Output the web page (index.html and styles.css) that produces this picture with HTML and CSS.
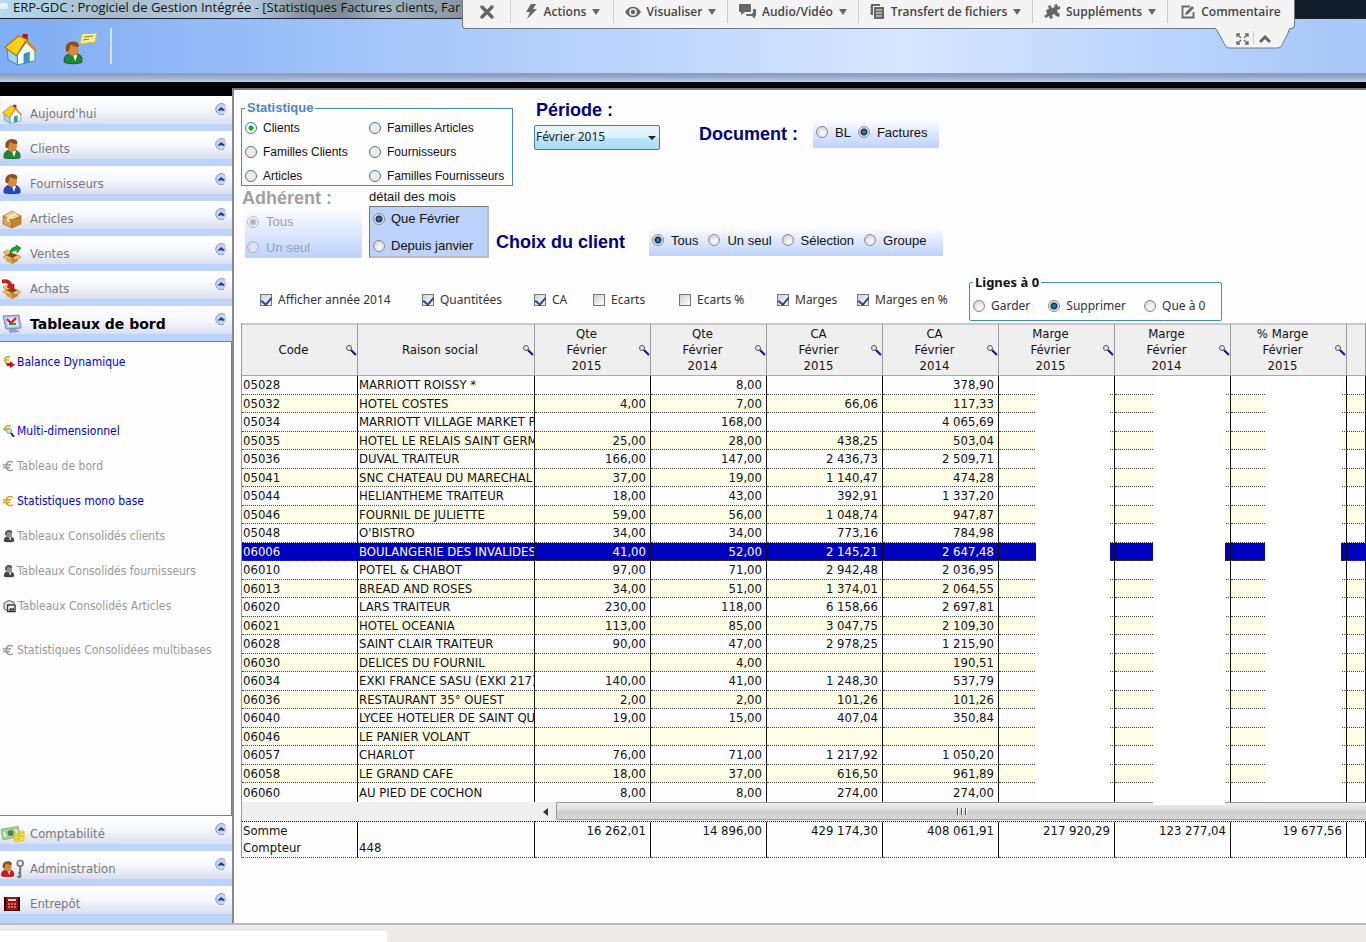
FILE: index.html
```html
<!DOCTYPE html>
<html lang="fr">
<head>
  <meta charset="UTF-8">
  <meta name="viewport" content="width=device-width, initial-scale=1.0">
  <title>ERP-GDC : Progiciel de Gestion Intégrée</title>
  <link rel="stylesheet" href="styles.css">
</head>
<body>
  <svg class="sprite" aria-hidden="true">
    <symbol id="house" viewBox="0 0 32 32">
      <path d="M3 15l10 6v10L4 26z" fill="#9fd8ec" stroke="#4b8fa8"/>
      <path d="M13 21l9-13 8 8v11l-17 4z" fill="#f2fbff" stroke="#4b8fa8"/>
      <path d="M19 20l6-2v10l-6 2z" fill="#3d94b4"/>
      <path d="M18 1h5v8l-5-3z" fill="#c41212"/>
      <path d="M1 14L14 3l8 3-10 16z" fill="#ffd016" stroke="#a87404"/>
      <path d="M21 5l11 12-2 1L20 8z" fill="#d88a10"/>
    </symbol>
    <symbol id="user" viewBox="0 0 20 20">
      <path d="M2 19c-1-5 2-7 5-8h6c4 1 6 4 5 8-4 1.500-12 1.500-16 0z" fill="currentColor" stroke="#222" stroke-opacity=".5"/>
      <path d="M10 12l2 6 2-6z" fill="#fff"/>
      <ellipse cx="10" cy="7" rx="5" ry="6" fill="#d88a3a"/>
      <path d="M4 9c-2-5 1-9 6-9s6 3 5 5c-3 0-5-1-7-2-1 1-1 4-2 6z" fill="#8a4f1c"/>
    </symbol>
    <symbol id="box" viewBox="0 0 20 20">
      <path d="M1 7l9 4v8l-9-4z" fill="#e2a24a" stroke="#8a5a1c" stroke-width=".6"/>
      <path d="M10 11l9-4v8l-9 4z" fill="#c9852e" stroke="#8a5a1c" stroke-width=".6"/>
      <path d="M1 7l9-5 9 5-9 4z" fill="#f6cf86" stroke="#8a5a1c" stroke-width=".6"/>
      <path d="M5 9l8-5 2 1-8 5v3l-2-1z" fill="#fff0c8"/>
    </symbol>
    <symbol id="openbox" viewBox="0 0 20 20">
      <path d="M4 11l6 3v6l-6-3z" fill="#e2a24a"/>
      <path d="M10 14l6-3v6l-6 3z" fill="#c9852e"/>
      <path d="M4 11l6-2 6 2-6 3z" fill="#7a4a14"/>
      <path d="M4 11l6 3-3 2-6-3zM16 11l-6 3 4 2 5-3zM4 11L1 8l5-2 4 3z" fill="#f3bf6a" stroke="#9a6420" stroke-width=".5"/>
    </symbol>
    <symbol id="screen" viewBox="0 0 20 20">
      <path d="M1 2l16-1 2 13-15 1z" fill="#b4bce4" stroke="#8088b8"/>
      <path d="M4 4l11-1 2 9-11 1z" fill="#e0e6fa"/>
      <path d="M5 5l4 4 5-5" fill="none" stroke="#e01010" stroke-width="2"/>
      <path d="M7 10h7" stroke="#20a030" stroke-width="2"/>
      <path d="M7 15h7l4 3-11 1z" fill="#9aa0c8"/>
    </symbol>
    <symbol id="money" viewBox="0 0 26 20">
      <path d="M1 5l18-3 2 11-18 3z" fill="#9ccf90" stroke="#8fbf88"/>
      <circle cx="11" cy="9" r="3" fill="#4f7f48"/>
      <path d="M4 8l2 5M16 5l2 4" stroke="#e8f6e0" stroke-width="2"/>
      <path d="M15 10h5v8h-5zM20 7h5v10h-5z" fill="#f4e04a" stroke="#e0c83c"/>
      <path d="M15 12h5M15 15h5M20 9h5M20 12h5" stroke="#d8b82c"/>
    </symbol>
    <symbol id="key" viewBox="0 0 10 20">
      <circle cx="5" cy="4" r="3" fill="none" stroke="#808080" stroke-width="2"/>
      <path d="M5 7v12M5 18H2M5 14H3" stroke="#707070" stroke-width="2"/>
    </symbol>
    <symbol id="calc" viewBox="0 0 16 16">
      <path d="M0 1h16v14H0z" fill="#300"/>
      <path d="M2 1h12v13H2z" fill="#a01010"/>
      <path d="M4 3h8v2H4z" fill="#ffd8d8"/>
      <path d="M4 8h2M7 8h2M10 8h2M4 11h2M7 11h2M10 11h2" stroke="#ffd0d0"/>
    </symbol>
    <symbol id="chevron" viewBox="0 0 12 12">
      <circle cx="6" cy="6" r="5.500" fill="#c6d4f2"/>
      <path d="M9 11A5.500 5.500 0 1 1 10 2" fill="none" stroke="#8296cc"/>
      <path d="M3 7l3-3 4 3-2 1-2-1-2 1z" fill="#1c3c94"/>
    </symbol>
    <symbol id="lens" viewBox="0 0 12 12">
      <path d="M6 6l5 5" stroke="#1010d0" stroke-width="2"/>
      <path d="M5 6l5 5" stroke="#222" stroke-width=".8"/>
      <circle cx="4" cy="4" r="2.500" fill="#e8e8e8" stroke="#555"/>
    </symbol>
    <symbol id="euro" viewBox="0 0 12 12">
      <path d="M10 2.500C7 0 3 2 3 6s4 6 7 3.500M0 5h8M0 7.500h7" fill="none" stroke="currentColor" stroke-width="1.400"/>
    </symbol>
  </svg>

  <header class="titlebar">
    <span class="app-dot"></span>
    <span>ERP-GDC : Progiciel de Gestion Intégrée - [Statistiques Factures clients, Far</span>
  </header>

  <div class="toolbar">
    <button class="tool" aria-label="Accueil"><svg width="33" height="33"><use href="#house"/></svg></button>
    <button class="tool" aria-label="Message client">
      <svg width="36" height="32" viewBox="0 0 36 32">
        <svg x="0" y="7" width="22" height="25" color="#1f8a2c"><use href="#user"/></svg>
        <path d="M20 1l15-1-2 9-15 2z" fill="#fbf08a" stroke="#d0c050"/>
        <path d="M22 4l9-1M21 7l6-1" stroke="#857a30"/>
      </svg>
    </button>
    <span class="tool-sep"></span>
  </div>

  <nav class="session" aria-label="Session distante">
    <button class="close" aria-label="Fermer"><svg width="16" height="16" viewBox="0 0 16 16"><path d="M3 3l10 10M13 3L3 13" stroke="#666" stroke-width="3.500" stroke-linecap="round"/></svg></button>
    <button><svg width="14" height="16" viewBox="0 0 14 16"><path d="M7 0h5L9 5h4L3 15l3-7H2z" fill="#666"/></svg>Actions<i></i></button>
    <button><svg width="16" height="12" viewBox="0 0 16 12"><path d="M0 6c4-7 12-7 16 0-4 7-12 7-16 0z" fill="#666"/><circle cx="8" cy="6" r="3.800" fill="#f4f4f4"/><circle cx="8" cy="6" r="2.200" fill="#666"/></svg>Visualiser<i></i></button>
    <button><svg width="17" height="16" viewBox="0 0 17 16"><path d="M1 0h10q1 0 1 1v6q0 1-1 1H6l-4 3V8H1Q0 8 0 7V1q0-1 1-1z" fill="#666"/><path d="M14 5h2q1 0 1 1v5q0 1-1 1v3l-3-3H8q-1 0-1-2h5q2 0 2-2z" fill="#666"/></svg>Audio/Vidéo<i></i></button>
    <button><svg width="15" height="16" viewBox="0 0 15 16"><path d="M1 0h9v2H3v9H1z" fill="#666"/><path d="M4 3h10v12H4z" fill="#666"/><path d="M6 6h6M6 9h6M6 12h6" stroke="#f4f4f4"/><path d="M0 3h3M0 6h3M0 9h3" stroke="#666"/></svg>Transfert de fichiers<i></i></button>
    <button><svg width="16" height="16" viewBox="0 0 16 16"><path d="M2 6l3-1-1-3 2-1 2 3 3-1-1-2 3-1 1 3 2-1v3l-3 1 1 3 2 1-1 3-3-1-2-2-2 1 1 3-3 1-1-3-3 2-2-2 3-2z" fill="#666"/></svg>Suppléments<i></i></button>
    <button><svg width="14" height="14" viewBox="0 0 14 14"><path d="M9 1.500H1.500v11h11V7" fill="none" stroke="#666" stroke-width="1.800"/><path d="M4 10l1-3 6-6 2 2-6 6z" fill="#666"/></svg>Commentaire</button>
    <svg class="tab" width="76" height="22" viewBox="0 0 76 22">
      <path d="M0 0h1q2 1 3 4l7 13q1 3 4 3h49q3 0 4-3l6-12q1-4 2-5z" fill="#f4f4f4"/>
      <path d="M0 0q3 1 4 4l7 13q1 3 4 3h49q3 0 4-3l6-12q1-4 2-5" fill="none" stroke="#6d7a86"/>
      <path d="M23 9V6h3M31 6h3v3M34 13v3h-3M26 16h-3v-3M23 6l4 4M34 6l-4 4M34 16l-4-4M23 16l4-4" fill="none" stroke="#666" stroke-width="1.300"/>
      <path d="M39.500 3v13" stroke="#ccc"/>
      <path d="M46 14l5-5 5 5" fill="none" stroke="#666" stroke-width="3"/>
    </svg>
  </nav>

  <div class="workspace">
    <aside class="sidebar">
      <button class="section"><svg width="20" height="20"><use href="#house"/></svg><span>Aujourd'hui</span><svg class="chev" width="12" height="12"><use href="#chevron"/></svg></button>
      <button class="section green"><svg width="20" height="20"><use href="#user"/></svg><span>Clients</span><svg class="chev" width="12" height="12"><use href="#chevron"/></svg></button>
      <button class="section blue"><svg width="20" height="20"><use href="#user"/></svg><span>Fournisseurs</span><svg class="chev" width="12" height="12"><use href="#chevron"/></svg></button>
      <button class="section"><svg width="20" height="20"><use href="#box"/></svg><span>Articles</span><svg class="chev" width="12" height="12"><use href="#chevron"/></svg></button>
      <button class="section"><svg width="20" height="20" viewBox="0 0 20 20"><use href="#openbox"/><path d="M8 10c0-5 2-7 6-7V1l5 3-4 5V6c-3 0-4 1-7 4z" fill="#20a030" stroke="#0c6a18" stroke-width=".6"/></svg><span>Ventes</span><svg class="chev" width="12" height="12"><use href="#chevron"/></svg></button>
      <button class="section"><svg width="20" height="20" viewBox="0 0 20 20"><use href="#openbox"/><path d="M0 1c6-1 9 1 10 5l2-1v6L5 8l2-1C6 4 4 3 0 4z" fill="#e01818" stroke="#900" stroke-width=".6"/></svg><span>Achats</span><svg class="chev" width="12" height="12"><use href="#chevron"/></svg></button>
      <button class="section current"><svg width="20" height="20"><use href="#screen"/></svg><span>Tableaux de bord</span><svg class="chev" width="12" height="12"><use href="#chevron"/></svg></button>
      <div class="panel">
        <a href="#" class="gap-below"><svg width="12" height="12" viewBox="0 0 12 12"><path d="M7 1C4 0 1 2 2 5s3 3 4 3M1 4h5" fill="none" stroke="#dba520" stroke-width="1.600"/><path d="M3 7h4V5l5 4-5 3v-2H4z" fill="#e01010"/></svg>Balance Dynamique</a>
        <a href="#"><svg width="12" height="12" viewBox="0 0 12 12"><path d="M8 1C4 0 1 2 2 6M0 4h6" fill="none" stroke="#dba520" stroke-width="1.600"/><circle cx="6" cy="6" r="2.500" fill="#bfe8f4" stroke="#5aa0b8"/><path d="M8 8l3 4" stroke="#333" stroke-width="2"/></svg>Multi-dimensionnel</a>
        <a href="#" class="off"><svg width="12" height="12"><use href="#euro"/></svg>Tableau de bord</a>
        <a href="#"><svg class="gold" width="12" height="12"><use href="#euro"/></svg>Statistiques mono base</a>
        <a href="#" class="off"><svg class="grey" width="12" height="14"><use href="#user"/></svg>Tableaux Consolidés clients</a>
        <a href="#" class="off"><svg class="grey" width="12" height="14"><use href="#user"/></svg>Tableaux Consolidés fournisseurs</a>
        <a href="#" class="off"><svg width="13" height="14" viewBox="0 0 14 14"><path d="M1 4l5-3 6 2v3H5v6L1 10z" fill="#ddd" stroke="#555"/><path d="M5 6h8v7H5z" fill="#fff" stroke="#333" stroke-width="1.400"/><path d="M6 12l2-3 2 1 2-2v4z" fill="#444"/></svg>Tableaux Consolidés Articles</a>
        <a href="#" class="off gap-above"><svg width="12" height="12"><use href="#euro"/></svg>Statistiques Consolidées multibases</a>
      </div>
      <button class="section wide"><svg width="25" height="20"><use href="#money"/></svg><span>Comptabilité</span><svg class="chev" width="12" height="12"><use href="#chevron"/></svg></button>
      <button class="section wide red"><svg width="25" height="20" viewBox="0 0 26 20"><svg width="16" height="20"><use href="#user"/></svg><svg x="16" width="10" height="20"><use href="#key"/></svg></svg><span>Administration</span><svg class="chev" width="12" height="12"><use href="#chevron"/></svg></button>
      <button class="section"><svg width="20" height="16"><use href="#calc"/></svg><span>Entrepôt</span><svg class="chev" width="12" height="12"><use href="#chevron"/></svg></button>
    </aside>

    <main class="content">
      <div class="row first">
        <fieldset class="stat">
          <legend>Statistique</legend>
          <label><input type="radio" name="stat" checked>Clients</label>
          <label><input type="radio" name="stat">Familles Articles</label>
          <label><input type="radio" name="stat">Familles Clients</label>
          <label><input type="radio" name="stat">Fournisseurs</label>
          <label><input type="radio" name="stat">Articles</label>
          <label><input type="radio" name="stat">Familles Fournisseurs</label>
        </fieldset>
        <div class="period">
          <label class="title" for="periode">Période :</label>
          <div class="combo"><select id="periode"><option>Février 2015</option></select></div>
        </div>
        <div class="document">
          <h2 class="title">Document :</h2>
          <div class="strip">
            <label><input type="radio" name="doc">BL</label>
            <label><input type="radio" name="doc" checked>Factures</label>
          </div>
        </div>
      </div>

      <div class="row second">
        <div class="member">
          <h2 class="title">Adhérent :</h2>
          <div class="strip stack">
            <label><input type="radio" name="adh" checked disabled>Tous</label>
            <label><input type="radio" name="adh" disabled>Un seul</label>
          </div>
        </div>
        <div class="months">
          <p>détail des mois</p>
          <div class="sunken">
            <label><input type="radio" name="mois" checked>Que Février</label>
            <label><input type="radio" name="mois">Depuis janvier</label>
          </div>
        </div>
        <div class="choice">
          <h2 class="title">Choix du client</h2>
          <div class="strip">
            <label><input type="radio" name="choix" checked>Tous</label>
            <label><input type="radio" name="choix">Un seul</label>
            <label><input type="radio" name="choix">Sélection</label>
            <label><input type="radio" name="choix">Groupe</label>
          </div>
        </div>
      </div>

      <div class="row third">
        <div class="checks">
          <label><input type="checkbox" checked>Afficher année 2014</label>
          <label><input type="checkbox" checked>Quantitées</label>
          <label><input type="checkbox" checked>CA</label>
          <label><input type="checkbox">Ecarts</label>
          <label><input type="checkbox">Ecarts %</label>
          <label><input type="checkbox" checked>Marges</label>
          <label><input type="checkbox" checked>Marges en %</label>
        </div>
        <fieldset class="zero">
          <legend>Lignes à 0</legend>
          <label><input type="radio" name="zero">Garder</label>
          <label><input type="radio" name="zero" checked>Supprimer</label>
          <label><input type="radio" name="zero">Que à 0</label>
        </fieldset>
      </div>

      <div class="grid">
        <table>
          <colgroup><col class="c"><col class="name"><col class="c"><col class="c"><col class="c"><col class="c"><col class="c"><col class="c"><col class="c"><col></colgroup>
          <thead>
            <tr>
              <th><div>Code<svg width="12" height="12"><use href="#lens"/></svg></div></th>
              <th><div>Raison social<svg width="12" height="12"><use href="#lens"/></svg></div></th>
              <th><div>Qte<br>Février<br>2015<svg width="12" height="12"><use href="#lens"/></svg></div></th>
              <th><div>Qte<br>Février<br>2014<svg width="12" height="12"><use href="#lens"/></svg></div></th>
              <th><div>CA<br>Février<br>2015<svg width="12" height="12"><use href="#lens"/></svg></div></th>
              <th><div>CA<br>Février<br>2014<svg width="12" height="12"><use href="#lens"/></svg></div></th>
              <th><div>Marge<br>Février<br>2015<svg width="12" height="12"><use href="#lens"/></svg></div></th>
              <th><div>Marge<br>Février<br>2014<svg width="12" height="12"><use href="#lens"/></svg></div></th>
              <th><div>% Marge<br>Février<br>2015<svg width="12" height="12"><use href="#lens"/></svg></div></th>
              <th></th>
            </tr>
          </thead>
          <tbody>
            <tr><td>05028</td><td>MARRIOTT ROISSY *</td><td></td><td>8,00</td><td></td><td>378,90</td><td></td><td></td><td></td><td></td></tr>
            <tr><td>05032</td><td>HOTEL COSTES</td><td>4,00</td><td>7,00</td><td>66,06</td><td>117,33</td><td></td><td></td><td></td><td></td></tr>
            <tr><td>05034</td><td>MARRIOTT VILLAGE MARKET P</td><td></td><td>168,00</td><td></td><td>4 065,69</td><td></td><td></td><td></td><td></td></tr>
            <tr><td>05035</td><td>HOTEL LE RELAIS SAINT GERM</td><td>25,00</td><td>28,00</td><td>438,25</td><td>503,04</td><td></td><td></td><td></td><td></td></tr>
            <tr><td>05036</td><td>DUVAL TRAITEUR</td><td>166,00</td><td>147,00</td><td>2 436,73</td><td>2 509,71</td><td></td><td></td><td></td><td></td></tr>
            <tr><td>05041</td><td>SNC CHATEAU DU MARECHAL</td><td>37,00</td><td>19,00</td><td>1 140,47</td><td>474,28</td><td></td><td></td><td></td><td></td></tr>
            <tr><td>05044</td><td>HELIANTHEME TRAITEUR</td><td>18,00</td><td>43,00</td><td>392,91</td><td>1 337,20</td><td></td><td></td><td></td><td></td></tr>
            <tr><td>05046</td><td>FOURNIL DE JULIETTE</td><td>59,00</td><td>56,00</td><td>1 048,74</td><td>947,87</td><td></td><td></td><td></td><td></td></tr>
            <tr><td>05048</td><td>O'BISTRO</td><td>34,00</td><td>34,00</td><td>773,16</td><td>784,98</td><td></td><td></td><td></td><td></td></tr>
            <tr class="selected"><td>06006</td><td>BOULANGERIE DES INVALIDES</td><td>41,00</td><td>52,00</td><td>2 145,21</td><td>2 647,48</td><td></td><td></td><td></td><td></td></tr>
            <tr><td>06010</td><td>POTEL &amp; CHABOT</td><td>97,00</td><td>71,00</td><td>2 942,48</td><td>2 036,95</td><td></td><td></td><td></td><td></td></tr>
            <tr><td>06013</td><td>BREAD AND ROSES</td><td>34,00</td><td>51,00</td><td>1 374,01</td><td>2 064,55</td><td></td><td></td><td></td><td></td></tr>
            <tr><td>06020</td><td>LARS TRAITEUR</td><td>230,00</td><td>118,00</td><td>6 158,66</td><td>2 697,81</td><td></td><td></td><td></td><td></td></tr>
            <tr><td>06021</td><td>HOTEL OCEANIA</td><td>113,00</td><td>85,00</td><td>3 047,75</td><td>2 109,30</td><td></td><td></td><td></td><td></td></tr>
            <tr><td>06028</td><td>SAINT CLAIR TRAITEUR</td><td>90,00</td><td>47,00</td><td>2 978,25</td><td>1 215,90</td><td></td><td></td><td></td><td></td></tr>
            <tr><td>06030</td><td>DELICES DU FOURNIL</td><td></td><td>4,00</td><td></td><td>190,51</td><td></td><td></td><td></td><td></td></tr>
            <tr><td>06034</td><td>EXKI FRANCE SASU (EXKI 217)</td><td>140,00</td><td>41,00</td><td>1 248,30</td><td>537,79</td><td></td><td></td><td></td><td></td></tr>
            <tr><td>06036</td><td>RESTAURANT 35° OUEST</td><td>2,00</td><td>2,00</td><td>101,26</td><td>101,26</td><td></td><td></td><td></td><td></td></tr>
            <tr><td>06040</td><td>LYCEE HOTELIER DE SAINT QU</td><td>19,00</td><td>15,00</td><td>407,04</td><td>350,84</td><td></td><td></td><td></td><td></td></tr>
            <tr><td>06046</td><td>LE PANIER VOLANT</td><td></td><td></td><td></td><td></td><td></td><td></td><td></td><td></td></tr>
            <tr><td>06057</td><td>CHARLOT</td><td>76,00</td><td>71,00</td><td>1 217,92</td><td>1 050,20</td><td></td><td></td><td></td><td></td></tr>
            <tr><td>06058</td><td>LE GRAND CAFE</td><td>18,00</td><td>37,00</td><td>616,50</td><td>961,89</td><td></td><td></td><td></td><td></td></tr>
            <tr><td>06060</td><td>AU PIED DE COCHON</td><td>8,00</td><td>8,00</td><td>274,00</td><td>274,00</td><td></td><td></td><td></td><td></td></tr>
          </tbody>
          <tfoot>
            <tr class="scroll">
              <td colspan="2"></td>
              <td colspan="8"><div class="scrollbar"><button aria-label="Défiler à gauche"></button><div class="thumb"><i></i><i></i><i></i></div></div></td>
            </tr>
            <tr class="sum"><td>Somme<br>Compteur</td><td><br>448</td><td>16 262,01</td><td>14 896,00</td><td>429 174,30</td><td>408 061,91</td><td>217 920,29</td><td>123 277,04</td><td>19 677,56</td><td></td></tr>
          </tfoot>
        </table>
        <div class="mask m1"></div>
        <div class="mask m2"></div>
        <div class="mask m3"></div>
      </div>
    </main>
  </div>

  <footer class="status"><div></div></footer>
</body>
</html>
```

FILE: styles.css
```css
* {
  box-sizing: border-box;
}
body {
  margin: 0;
  min-height: 100vh;
  display: flex;
  flex-direction: column;
  position: relative;
  overflow-x: hidden;
  background: #fff;
  color: #111;
  font-family: "DejaVu Sans Condensed", "Noto Sans", sans-serif;
  font-size: 13px;
}
button {
  border: none;
  background: none;
  padding: 0;
  font: inherit;
  color: inherit;
}
h2, p {
  margin: 0;
}
fieldset {
  margin: 0;
  min-width: 0;
}
.sprite {
  position: absolute;
  width: 0;
  height: 0;
}

/* top of the window */
.titlebar {
  height: 19px;
  display: flex;
  gap: 5px;
  border-bottom: 1px solid #223;
  background: linear-gradient(90deg, #b4dcf0 0, #a8bccb 8%, #b8cfe0 18%, #8a98a4 22%, #7c8a96 25%, #a0b8c8 28%, #8c9aa6 33%, #101c28 50%, #101c28 100%);
  font-family: "Open Sans", sans-serif;
  font-size: 13px;
  line-height: 14px;
  white-space: nowrap;
}
.app-dot {
  width: 8px;
  height: 6px;
  margin-top: 3px;
  border-radius: 0 3px 3px 0;
  background: #e4f4f0;
}
.toolbar {
  height: 63px;
  display: flex;
  align-items: flex-start;
  padding: 14px 4px 0;
  gap: 25px;
  background:
    linear-gradient(#9a9fa8, #8e9dc0 2px, #b6cdf2 9px) bottom / 100% 9px no-repeat,
    linear-gradient(90deg, #80adf4, #d6e6ff 66%, #a6c7f8);
}
.tool svg {
  display: block;
}
.tool-sep {
  width: 2px;
  height: 36px;
  margin-top: -5px;
  margin-left: -13px;
  background: #d5e4fc;
}

/* remote session bar lying over the title bar */
.session {
  position: absolute;
  top: 0;
  right: 71px;
  display: grid;
  grid-template-columns: 47px 103px 114px 131px 174px 135px 127px;
  height: 29px;
  padding-bottom: 5px;
  background: #f4f4f4;
  border: 1px solid #6d7a86;
  border-top: none;
  border-radius: 0 0 4px 4px;
  font-family: "Open Sans", sans-serif;
  font-size: 12px;
  font-weight: 600;
  color: #444;
}
.session button {
  display: flex;
  align-items: center;
  justify-content: center;
  gap: 6px;
  white-space: nowrap;
  border-left: 1px solid #ccc;
}
.session .close {
  border-left: none;
}
.session i {
  border: 4px solid transparent;
  border-top: 6px solid #666;
  border-bottom: none;
}
.tab {
  position: absolute;
  right: 4px;
  top: 28px;
}

/* side menu */
.workspace {
  flex: 1;
  display: flex;
  background: #000;
}
.sidebar {
  width: 232px;
  flex: none;
  margin-top: 14px;
  padding-bottom: 2px;
  display: flex;
  flex-direction: column;
  background: #bcd4fb;
}
.section {
  height: 35px;
  flex: none;
  display: flex;
  align-items: center;
  padding: 0 5px 0 2px;
  border-bottom: 7px solid #bcd4fb;
  background: linear-gradient(#fff, #f6f8fe 50%, #d9def0);
  color: #777;
  text-align: left;
}
.section span {
  flex: 1;
  margin-top: 7px;
}
.section > svg:first-child {
  flex: none;
  margin-top: 7px;
  margin-right: 8px;
}
.section.wide {
  padding-left: 0;
}
.section.wide > svg:first-child {
  margin-right: 5px;
}
.section .chev {
  margin-bottom: 2px;
}
.green svg { color: #1f8a2c; }
.blue svg { color: #2448c8; }
.red svg { color: #d81818; }
.current {
  color: #000;
  font-family: "DejaVu Sans", sans-serif;
  font-size: 14px;
  font-weight: bold;
}
.panel {
  flex: 1;
  display: flex;
  flex-direction: column;
  padding-top: 2px;
  border: 1px solid #5088c0;
  border-left: none;
  background: #fdfdfe;
  font-size: 12px;
}
.panel a {
  height: 35px;
  display: flex;
  align-items: center;
  gap: 2px;
  padding-left: 3px;
  color: #0000e0;
  text-decoration: none;
  white-space: nowrap;
}
.panel a.off {
  color: #999;
}
.panel .gap-below {
  margin-bottom: 34px;
}
.panel .gap-above {
  margin-top: 9px;
}
.panel .gold {
  color: #d8a010;
}
.panel .grey {
  color: #444;
  filter: grayscale(1);
}

/* filters */
.content {
  flex: 1;
  min-width: 0;
  margin-top: 6px;
  padding: 10px 0 0 7px;
  border-top: 2px solid #777;
  border-left: 2px solid #888;
  background: #fdfdfe;
  font-family: "Liberation Sans", sans-serif;
}
.row {
  display: flex;
  align-items: flex-start;
}
.row label {
  display: flex;
  align-items: center;
  gap: 6px;
  white-space: nowrap;
}
.row .title {
  font-size: 18px;
  font-weight: bold;
  line-height: 20px;
  color: #000080;
}
.stat {
  width: 272px;
  display: grid;
  grid-template-columns: 124px 1fr;
  row-gap: 8px;
  padding: 4px 2px 1px 3px;
  border: 1px solid #4a88c4;
  font-size: 12px;
  line-height: 16px;
}
legend {
  line-height: 16px;
  padding: 0 2px;
  font-size: 13px;
  font-weight: bold;
}
.stat legend {
  color: #4a88c4;
}
input[type="radio"] {
  appearance: none;
  flex: none;
  width: 12px;
  height: 12px;
  margin: 0;
  border: 1px solid #8a8a8a;
  border-radius: 50%;
  background: radial-gradient(circle at 60% 65%, #f4f4f4 20%, #c8c8c8);
}
input[type="radio"]:checked {
  background: radial-gradient(circle at 50% 50%, #3fa0d0 0, #0c2c54 3px, #e4e4e4 4px);
}
.stat input[type="radio"] {
  border-color: #3a78ac;
  background: #f0ece0;
}
.stat input[type="radio"]:checked {
  background: radial-gradient(circle, #10b010 2px, #fff 3px);
}
input[type="radio"]:disabled {
  opacity: .5;
}
input[type="radio"]:checked:disabled {
  background: radial-gradient(circle, #777 2px, #eee 4px);
}
.period {
  margin-left: 21px;
}
.period .title {
  padding-left: 2px;
}
.combo {
  position: relative;
  width: 126px;
  margin-top: 5px;
}
.combo::after {
  content: "";
  position: absolute;
  right: 4px;
  top: 11px;
  border: 4px solid transparent;
  border-top-color: #222;
  border-bottom: none;
}
.combo select {
  appearance: none;
  width: 100%;
  height: 25px;
  padding: 0 1px 3px;
  border: 1px solid #3c7fb1;
  border-radius: 2px;
  background: linear-gradient(#eaf6fd 0, #d9f0fc 50%, #bee6fd 51%, #a7d9f5);
  color: #222;
  font-family: "Noto Sans", sans-serif;
  font-size: 12px;
}
.document, .choice {
  display: flex;
  align-items: center;
}
.document {
  margin: 20px 0 0 39px;
  gap: 15px;
}
.strip {
  display: flex;
  height: 28px;
  gap: 9px;
  padding: 0 3px 4px;
  background: linear-gradient(#fbfcff, #bcd2fa);
}
.strip label {
  gap: 7px;
}
.document .strip {
  width: 126px;
  gap: 7px;
}
.second {
  height: 74px;
  padding-top: 2px;
}
.member {
  width: 128px;
}
.member .title {
  padding-left: 1px;
  color: #a0a0a0;
}
.member .strip {
  width: 117px;
  height: 48px;
  margin: 2px 0 0 4px;
  padding: 3px 2px 2px;
  gap: 8px;
  flex-direction: column;
  justify-content: space-around;
  color: #9aa0ac;
}
.months p {
  line-height: 18px;
}
.sunken {
  width: 120px;
  height: 52px;
  display: flex;
  flex-direction: column;
  justify-content: space-between;
  padding: 4px 3px 3px;
  border: 1px solid #777;
  border-right: 2px solid #bbb;
  border-bottom: 2px solid #bbb;
  background: #bcd2fa;
}
.choice {
  margin: 40px 0 0 7px;
  gap: 24px;
}
.choice .strip {
  width: 294px;
  gap: 10px;
}
.third {
  height: 63px;
  padding-top: 14px;
  font-family: "Noto Sans", sans-serif;
}
.third label {
  color: #333;
}
.checks {
  display: grid;
  grid-template-columns: 162px 112px 59px 86px 98px 80px 112px;
  margin: 17px 0 0 19px;
  font-size: 12px;
  line-height: 18px;
}
input[type="checkbox"] {
  appearance: none;
  flex: none;
  width: 12px;
  height: 12px;
  margin: 0;
  border: 1px solid #777;
  background: linear-gradient(135deg, #ccd0d6, #fff);
  display: grid;
  place-items: center;
}
input[type="checkbox"]:checked::before {
  content: "";
  width: 5px;
  height: 8px;
  margin-bottom: 3px;
  border: solid #2c4490;
  border-width: 0 2px 2px 0;
  transform: rotate(40deg);
}
.zero {
  width: 253px;
  display: flex;
  gap: 18px;
  padding: 7px 3px 5px;
  border: 1px solid #4a88c4;
  border-radius: 2px;
  font-size: 12px;
  line-height: 18px;
}
.zero legend {
  color: #111;
}

/* statistics table */
.grid {
  position: relative;
  font-family: "DejaVu Sans Condensed", "Noto Sans", sans-serif;
}
table {
  width: 100%;
  table-layout: fixed;
  border-collapse: separate;
  border-spacing: 0;
  border-left: 1px solid #999;
  line-height: 16px;
}
.c { width: 116px; }
.name { width: 177px; }
th {
  height: 53px;
  padding: 0;
  border-top: 2px solid #c8c8cc;
  border-right: 1px solid #999;
  border-bottom: 1px solid #aaa;
  background: #efefef;
  font-weight: normal;
}
th div {
  position: relative;
  padding-right: 12px;
}
th svg {
  position: absolute;
  right: 0;
  top: 50%;
  margin-top: -6px;
}
td {
  height: 18px;
  padding: 0 4px 0 1px;
  border-right: 1px solid #111;
  border-bottom: 1px dotted #444;
  text-align: right;
  white-space: nowrap;
  overflow: hidden;
}
tbody tr:nth-child(odd) td {
  height: 19px;
}
td:nth-child(1), td:nth-child(2) {
  text-align: left;
  padding-right: 0;
}
tbody tr:nth-child(even) td {
  background: #fefde6;
}
tbody tr.selected td {
  background: #0000c0;
  color: #fff;
}
tbody tr:last-child td {
  border-bottom: none;
}
.scroll td {
  height: 20px;
  padding: 0;
  border-right: none;
  border-bottom: 1px dotted #111;
  background: #efefef;
}
.scrollbar {
  display: flex;
  height: 19px;
}
.scrollbar button {
  width: 21px;
  display: grid;
  place-items: center;
}
.scrollbar button::before {
  content: "";
  border: 4px solid transparent;
  border-right: 5px solid #333;
  border-left: none;
}
.thumb {
  flex: 1;
  display: flex;
  align-items: center;
  justify-content: center;
  gap: 2px;
  margin-bottom: 1px;
  border: 1px solid #999;
  border-right: none;
  border-radius: 2px 0 0 2px;
  background: linear-gradient(#eee, #ddd 45%, #cdcdcd 50%, #d6d6d6);
}
.thumb i {
  width: 2px;
  height: 7px;
  border-left: 1px solid #555;
  background: #fff;
}
.sum td {
  height: 36px;
  vertical-align: top;
  line-height: 17px;
}

/* hidden margin figures */
.mask {
  position: absolute;
  top: 53px;
  height: 426px;
  background: #fff;
}
.m1 { left: 795px; width: 74px; }
.m2 { left: 912px; width: 72px; height: 429px; }
.m3 { left: 1024px; width: 76px; }

.status {
  height: 19px;
  padding-top: 6px;
  border-top: 2px solid #bbb;
  background: #efebeb;
}
.status div {
  width: 387px;
  height: 100%;
  background: #fff;
}
```
